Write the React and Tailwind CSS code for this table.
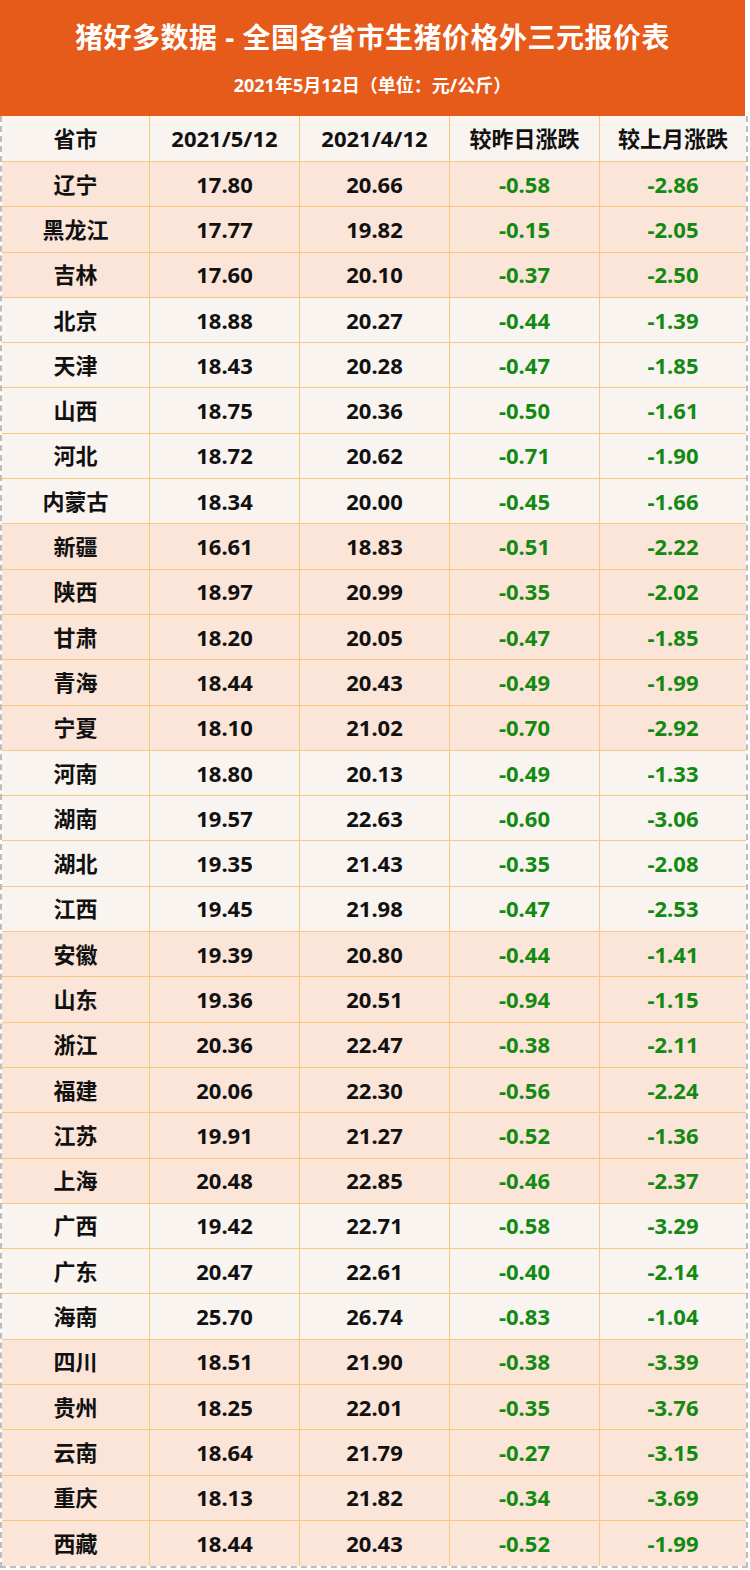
const rows = [
  ["辽宁", "17.80", "20.66", "-0.58", "-2.86", 0],
  ["黑龙江", "17.77", "19.82", "-0.15", "-2.05", 0],
  ["吉林", "17.60", "20.10", "-0.37", "-2.50", 0],
  ["北京", "18.88", "20.27", "-0.44", "-1.39", 1],
  ["天津", "18.43", "20.28", "-0.47", "-1.85", 1],
  ["山西", "18.75", "20.36", "-0.50", "-1.61", 1],
  ["河北", "18.72", "20.62", "-0.71", "-1.90", 1],
  ["内蒙古", "18.34", "20.00", "-0.45", "-1.66", 1],
  ["新疆", "16.61", "18.83", "-0.51", "-2.22", 0],
  ["陕西", "18.97", "20.99", "-0.35", "-2.02", 0],
  ["甘肃", "18.20", "20.05", "-0.47", "-1.85", 0],
  ["青海", "18.44", "20.43", "-0.49", "-1.99", 0],
  ["宁夏", "18.10", "21.02", "-0.70", "-2.92", 0],
  ["河南", "18.80", "20.13", "-0.49", "-1.33", 1],
  ["湖南", "19.57", "22.63", "-0.60", "-3.06", 1],
  ["湖北", "19.35", "21.43", "-0.35", "-2.08", 1],
  ["江西", "19.45", "21.98", "-0.47", "-2.53", 1],
  ["安徽", "19.39", "20.80", "-0.44", "-1.41", 0],
  ["山东", "19.36", "20.51", "-0.94", "-1.15", 0],
  ["浙江", "20.36", "22.47", "-0.38", "-2.11", 0],
  ["福建", "20.06", "22.30", "-0.56", "-2.24", 0],
  ["江苏", "19.91", "21.27", "-0.52", "-1.36", 0],
  ["上海", "20.48", "22.85", "-0.46", "-2.37", 0],
  ["广西", "19.42", "22.71", "-0.58", "-3.29", 1],
  ["广东", "20.47", "22.61", "-0.40", "-2.14", 1],
  ["海南", "25.70", "26.74", "-0.83", "-1.04", 1],
  ["四川", "18.51", "21.90", "-0.38", "-3.39", 0],
  ["贵州", "18.25", "22.01", "-0.35", "-3.76", 0],
  ["云南", "18.64", "21.79", "-0.27", "-3.15", 0],
  ["重庆", "18.13", "21.82", "-0.34", "-3.69", 0],
  ["西藏", "18.44", "20.43", "-0.52", "-1.99", 0],
];

const font = "font-['Noto_Sans','Noto_Sans_CJK_SC',sans-serif]";

function Cell({ children, green, last }) {
  return (
    <div
      className={`flex items-center justify-center text-[22px] font-bold ${
        green ? "text-[#128a12]" : "text-[#111]"
      } ${last ? "" : "border-r border-[#f7c97e]"}`}
    >
      {children}
    </div>
  );
}

export default function App() {
  return (
    <div className={`w-[750px] h-[1570px] bg-white ${font}`}>
      <div className="w-[745px] h-[116px] bg-[#e65a1a] flex flex-col items-center text-white font-bold">
        <h1 className="text-[28px] leading-none mt-[23px] tracking-[0.5px]">
          猪好多数据 - 全国各省市生猪价格外三元报价表
        </h1>
        <p className="text-[18px] leading-none mt-[25px]">2021年5月12日（单位：元/公斤）</p>
      </div>
      <div className="w-[748px] border-l-2 border-r-2 border-b-2 border-dashed border-[#bdbdbd]">
        <div className="grid grid-cols-[148px_150px_150px_150px_1fr] h-[46px] bg-[#f9f4f0] border-b border-[#f7c97e]">
          <Cell>省市</Cell>
          <Cell>2021/5/12</Cell>
          <Cell>2021/4/12</Cell>
          <Cell>较昨日涨跌</Cell>
          <Cell last>较上月涨跌</Cell>
        </div>
        {rows.map((r, i) => (
          <div
            key={r[0]}
            className={`grid grid-cols-[148px_150px_150px_150px_1fr] h-[45.3px] ${
              i < rows.length - 1 ? "border-b border-[#f7c97e]" : ""
            } ${r[5] ? "bg-[#f9f4f0]" : "bg-[#fbe4d8]"}`}
          >
            <Cell>{r[0]}</Cell>
            <Cell>{r[1]}</Cell>
            <Cell>{r[2]}</Cell>
            <Cell green>{r[3]}</Cell>
            <Cell green last>{r[4]}</Cell>
          </div>
        ))}
      </div>
    </div>
  );
}
